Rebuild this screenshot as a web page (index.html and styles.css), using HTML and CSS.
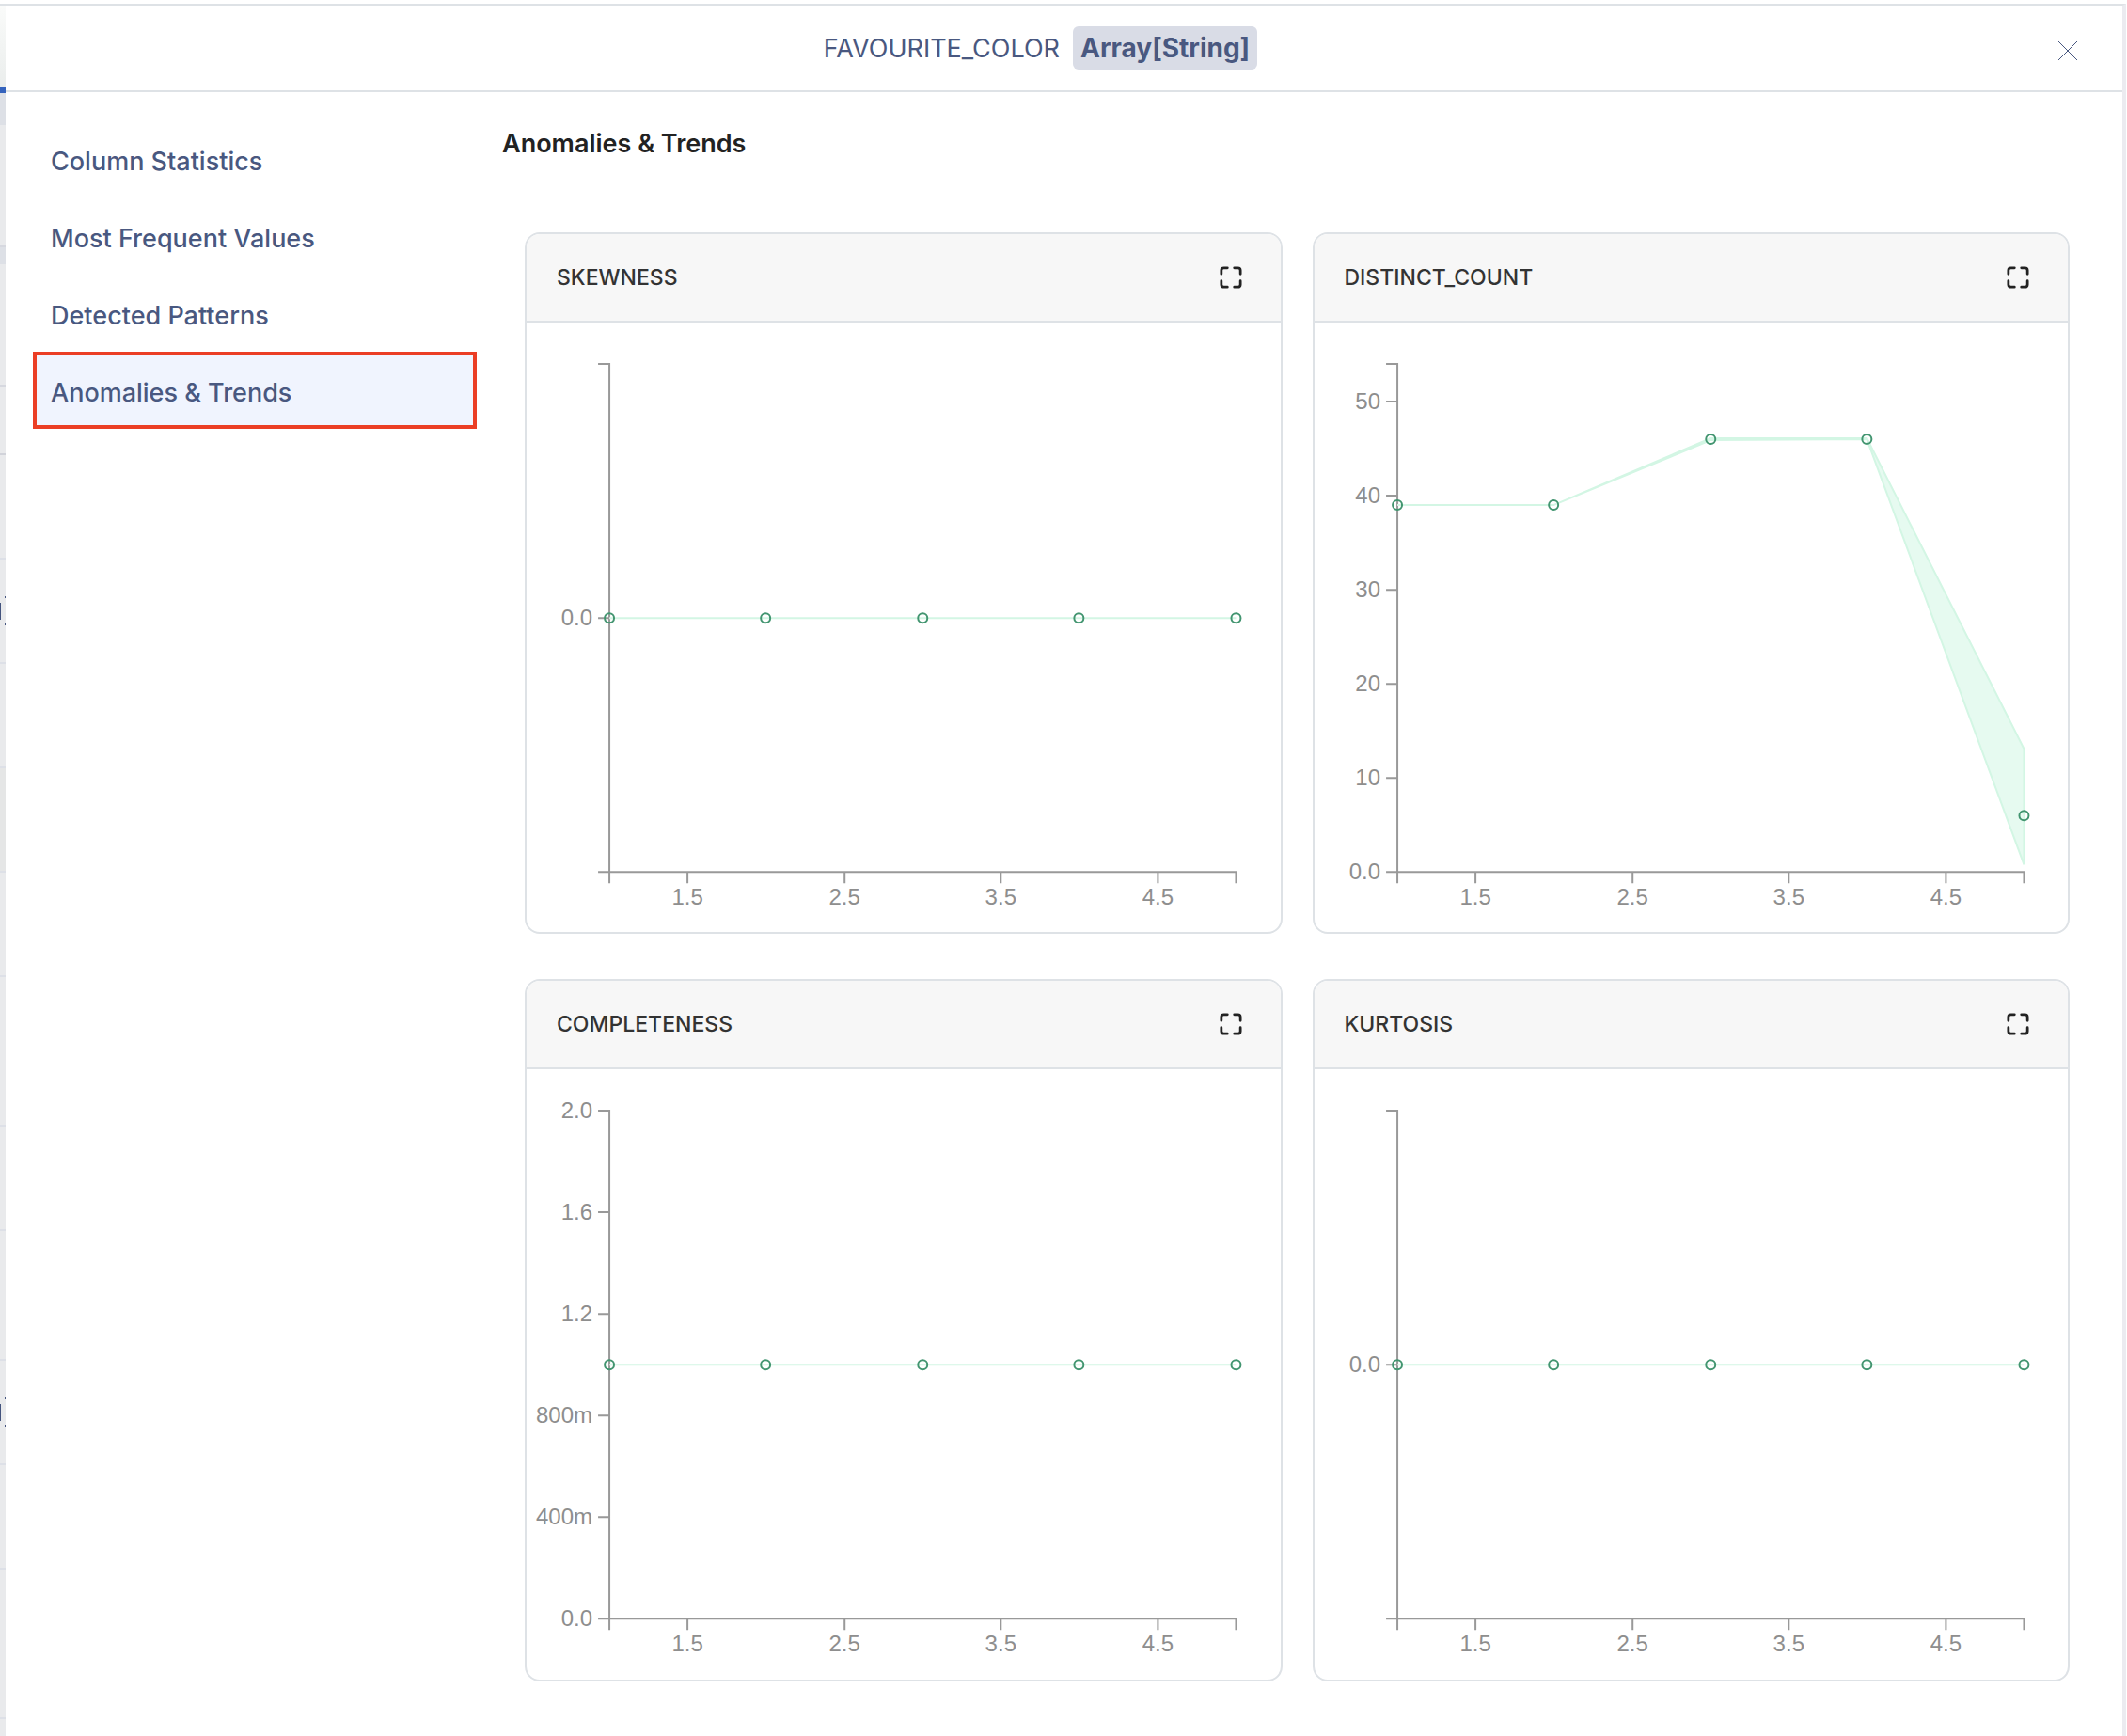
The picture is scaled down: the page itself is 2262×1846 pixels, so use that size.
FILE: index.html
```html
<!DOCTYPE html>
<html lang="en">
    <head>
        <meta charset="utf-8">
        <title>FAVOURITE_COLOR</title>
        <link rel="stylesheet" href="styles.css">
    </head>
    <body>
        <div class="behind">
            <div class="topbar"></div>
            <div class="tabline"></div>
            <div class="band"></div>
            <div class="row tall"></div>
            <div class="band thin"></div>
            <div class="row tall"></div>
            <div class="row short"></div>
            <div class="row"></div>
            <div class="row text"></div>
            <div class="row"></div>
            <div class="row dark"></div>
            <div class="row"></div>
            <div class="row big"></div>
            <div class="row"></div>
            <div class="row medium"></div>
            <div class="row text"></div>
            <div class="row"></div>
            <div class="row big"></div>
        </div>

        <div class="panel">
            <header class="header">
                <h1>FAVOURITE_COLOR</h1>
                <span class="type">Array[String]</span>
                <button class="close" aria-label="Close">
                    <svg width="22" height="22" viewBox="0 0 22 22"><path d="M1 1L21 21M21 1L1 21"/></svg>
                </button>
            </header>

            <div class="content">
                <nav class="menu">
                    <a href="#statistics">Column Statistics</a>
                    <a href="#values">Most Frequent Values</a>
                    <a href="#patterns">Detected Patterns</a>
                    <a href="#trends" class="active">Anomalies &amp; Trends</a>
                </nav>

                <main class="main">
                    <h2>Anomalies &amp; Trends</h2>

                    <div class="cards">
                        <section class="card">
                            <div class="card-header">
                                <h3>SKEWNESS</h3>
                                <button class="expand" aria-label="Expand">
                                    <svg width="24" height="24" viewBox="0 0 26 26"><path d="M2 9V5Q2 2 5 2H9M17 2H21Q24 2 24 5V9M24 17V21Q24 24 21 24H17M9 24H5Q2 24 2 21V17"/></svg>
                                </button>
                            </div>
                            <svg class="chart" viewBox="0 0 801 648">
                                <path class="axis" d="M76 44H88V584M76 584H754V596M88 584V596M76 314H88M171 584V596M338 584V596M504 584V596M671 584V596"/>
                                <g class="y">
                                    <text x="70" y="322">0.0</text>
                                </g>
                                <g class="x">
                                    <text x="171" y="619">1.5</text>
                                    <text x="338" y="619">2.5</text>
                                    <text x="504" y="619">3.5</text>
                                    <text x="671" y="619">4.5</text>
                                </g>
                                <path class="area" d="M88 314H754"/>
                                <g class="dots">
                                    <circle cx="88" cy="314" r="5"/>
                                    <circle cx="254" cy="314" r="5"/>
                                    <circle cx="421" cy="314" r="5"/>
                                    <circle cx="587" cy="314" r="5"/>
                                    <circle cx="754" cy="314" r="5"/>
                                </g>
                            </svg>
                        </section>

                        <section class="card">
                            <div class="card-header">
                                <h3>DISTINCT_COUNT</h3>
                                <button class="expand" aria-label="Expand">
                                    <svg width="24" height="24" viewBox="0 0 26 26"><path d="M2 9V5Q2 2 5 2H9M17 2H21Q24 2 24 5V9M24 17V21Q24 24 21 24H17M9 24H5Q2 24 2 21V17"/></svg>
                                </button>
                            </div>
                            <svg class="chart" viewBox="0 0 801 648">
                                <path class="axis" d="M76 44H88V584M76 584H754V596M88 584V596M76 84H88M76 184H88M76 284H88M76 384H88M76 484H88M171 584V596M338 584V596M504 584V596M671 584V596"/>
                                <g class="y">
                                    <text x="70" y="92">50</text>
                                    <text x="70" y="192">40</text>
                                    <text x="70" y="292">30</text>
                                    <text x="70" y="392">20</text>
                                    <text x="70" y="492">10</text>
                                    <text x="70" y="592">0.0</text>
                                </g>
                                <g class="x">
                                    <text x="171" y="619">1.5</text>
                                    <text x="338" y="619">2.5</text>
                                    <text x="504" y="619">3.5</text>
                                    <text x="671" y="619">4.5</text>
                                </g>
                                <path class="area" d="M88 194H254L421 123L587 123L754 453V576L587 124L421 125L254 194H88"/>
                                <g class="dots">
                                    <circle cx="88" cy="194" r="5"/>
                                    <circle cx="254" cy="194" r="5"/>
                                    <circle cx="421" cy="124" r="5"/>
                                    <circle cx="587" cy="124" r="5"/>
                                    <circle cx="754" cy="524" r="5"/>
                                </g>
                            </svg>
                        </section>

                        <section class="card">
                            <div class="card-header">
                                <h3>COMPLETENESS</h3>
                                <button class="expand" aria-label="Expand">
                                    <svg width="24" height="24" viewBox="0 0 26 26"><path d="M2 9V5Q2 2 5 2H9M17 2H21Q24 2 24 5V9M24 17V21Q24 24 21 24H17M9 24H5Q2 24 2 21V17"/></svg>
                                </button>
                            </div>
                            <svg class="chart" viewBox="0 0 801 648">
                                <path class="axis" d="M76 44H88V584M76 584H754V596M88 584V596M76 152H88M76 260H88M76 368H88M76 476H88M171 584V596M338 584V596M504 584V596M671 584V596"/>
                                <g class="y">
                                    <text x="70" y="52">2.0</text>
                                    <text x="70" y="160">1.6</text>
                                    <text x="70" y="268">1.2</text>
                                    <text x="70" y="376">800m</text>
                                    <text x="70" y="484">400m</text>
                                    <text x="70" y="592">0.0</text>
                                </g>
                                <g class="x">
                                    <text x="171" y="619">1.5</text>
                                    <text x="338" y="619">2.5</text>
                                    <text x="504" y="619">3.5</text>
                                    <text x="671" y="619">4.5</text>
                                </g>
                                <path class="area" d="M88 314H754"/>
                                <g class="dots">
                                    <circle cx="88" cy="314" r="5"/>
                                    <circle cx="254" cy="314" r="5"/>
                                    <circle cx="421" cy="314" r="5"/>
                                    <circle cx="587" cy="314" r="5"/>
                                    <circle cx="754" cy="314" r="5"/>
                                </g>
                            </svg>
                        </section>

                        <section class="card">
                            <div class="card-header">
                                <h3>KURTOSIS</h3>
                                <button class="expand" aria-label="Expand">
                                    <svg width="24" height="24" viewBox="0 0 26 26"><path d="M2 9V5Q2 2 5 2H9M17 2H21Q24 2 24 5V9M24 17V21Q24 24 21 24H17M9 24H5Q2 24 2 21V17"/></svg>
                                </button>
                            </div>
                            <svg class="chart" viewBox="0 0 801 648">
                                <path class="axis" d="M76 44H88V584M76 584H754V596M88 584V596M76 314H88M171 584V596M338 584V596M504 584V596M671 584V596"/>
                                <g class="y">
                                    <text x="70" y="322">0.0</text>
                                </g>
                                <g class="x">
                                    <text x="171" y="619">1.5</text>
                                    <text x="338" y="619">2.5</text>
                                    <text x="504" y="619">3.5</text>
                                    <text x="671" y="619">4.5</text>
                                </g>
                                <path class="area" d="M88 314H754"/>
                                <g class="dots">
                                    <circle cx="88" cy="314" r="5"/>
                                    <circle cx="254" cy="314" r="5"/>
                                    <circle cx="421" cy="314" r="5"/>
                                    <circle cx="587" cy="314" r="5"/>
                                    <circle cx="754" cy="314" r="5"/>
                                </g>
                            </svg>
                        </section>
                    </div>
                </main>
            </div>
        </div>
    </body>
</html>
```
FILE: styles.css
```css
* {
    box-sizing: border-box;
}

body {
    display: flex;
    min-height: 100vh;
    margin: 0;
    padding: 4px 1px 0 0;
    background: #fff;
    color: #495880;
    font-family: Inter, 'Liberation Sans', sans-serif;
}

h1, h2, h3 {
    margin: 0;
}

button {
    padding: 0;
    border: none;
    background: none;
    cursor: pointer;
}

button svg {
    display: block;
    fill: none;
}

/* the page that shows beside the open panel */
.behind {
    display: flex;
    flex-direction: column;
    flex: none;
    width: 6px;
    height: calc(100vh - 4px);
    overflow: hidden;
    border-top: 2px solid #dee2e6;
    background: #e9eaec;
}

.behind div {
    flex: none;
}

.topbar {
    height: 87px;
    background: linear-gradient(#fafbfa, #eaedec);
}

.tabline {
    height: 6px;
    background: #3563bd;
}

.band {
    height: 34px;
    background: #dde0e6;
}

.band.thin {
    height: 18px;
}

.row {
    height: 111px;
    border-bottom: 2px solid #dde0e7;
}

.row.tall {
    height: 130px;
    border-color: #d6d8df;
}

.row.short {
    height: 73px;
    border-color: #d1d3da;
}

.row.medium {
    height: 138px;
}

.row.big {
    height: 159px;
}

.row.dark {
    background: #e5e6e6;
}

.row.text {
    display: flex;
    align-items: center;
    justify-content: space-between;
}

.row.text::before {
    content: '';
    width: 1px;
    height: 18px;
    background: #44547e;
}

.row.text::after {
    content: '';
    width: 1px;
    height: 27px;
    border: solid #44547e;
    border-width: 2px 0;
}

.panel {
    flex: 1;
    min-width: 0;
    border-top: 2px solid #dee2e6;
    border-right: 4px solid #ebebf0;
}

.header {
    position: relative;
    display: flex;
    align-items: center;
    justify-content: center;
    gap: 14px;
    height: 92px;
    padding-right: 50px;
    border-bottom: 2px solid #dee2e6;
}

.header h1 {
    font-size: 27px;
    font-weight: 400;
}

.type {
    padding: 0 8px;
    border-radius: 6px;
    background: #d9dce6;
    font-size: 28px;
    font-weight: 700;
    line-height: 46px;
}

.close {
    position: absolute;
    top: 37px;
    right: 47px;
}

.close svg {
    stroke: #495880;
    stroke-width: 1;
}

.content {
    display: flex;
    gap: 27px;
    padding: 30px 56px 59px 29px;
}

.menu {
    flex: none;
    width: 472px;
}

.menu a {
    display: block;
    height: 82px;
    padding: 6px 19px 0;
    color: #495880;
    font-size: 27px;
    font-weight: 500;
    line-height: 76px;
    text-decoration: none;
}

.menu a.active {
    padding: 2px 15px 0;
    border: 4px solid #eb3e25;
    background: #f0f4fe;
}

.main {
    flex: 1;
    min-width: 0;
}

.main h2 {
    color: #222;
    font-size: 27px;
    font-weight: 600;
    line-height: 50px;
}

.cards {
    display: grid;
    grid-template-columns: 1fr 1fr;
    gap: 48px 32px;
    margin: 69px 0 0 24px;
}

.card {
    overflow: hidden;
    border: 2px solid #dee2e6;
    border-radius: 16px;
}

.card-header {
    display: flex;
    align-items: center;
    justify-content: space-between;
    height: 94px;
    padding: 0 41px 0 32px;
    border-bottom: 2px solid #dee2e6;
    background: #f7f7f7;
}

.card-header h3 {
    color: #333;
    font-size: 23px;
    font-weight: 500;
}

.expand svg {
    stroke: #222;
    stroke-width: 3;
    stroke-linecap: round;
}

.chart {
    display: block;
    width: 100%;
    font-family: 'Liberation Sans', Arial, sans-serif;
    font-size: 24px;
}

.axis {
    fill: none;
    stroke: #999;
    stroke-width: 2;
}

.y {
    fill: #8e8e8e;
    text-anchor: end;
}

.x {
    fill: #8e8e8e;
    text-anchor: middle;
}

.area {
    fill: #e6faf0;
    stroke: #d3f6e4;
    stroke-width: 2;
}

.dots {
    fill: none;
    stroke: #429570;
    stroke-width: 2;
}
```
